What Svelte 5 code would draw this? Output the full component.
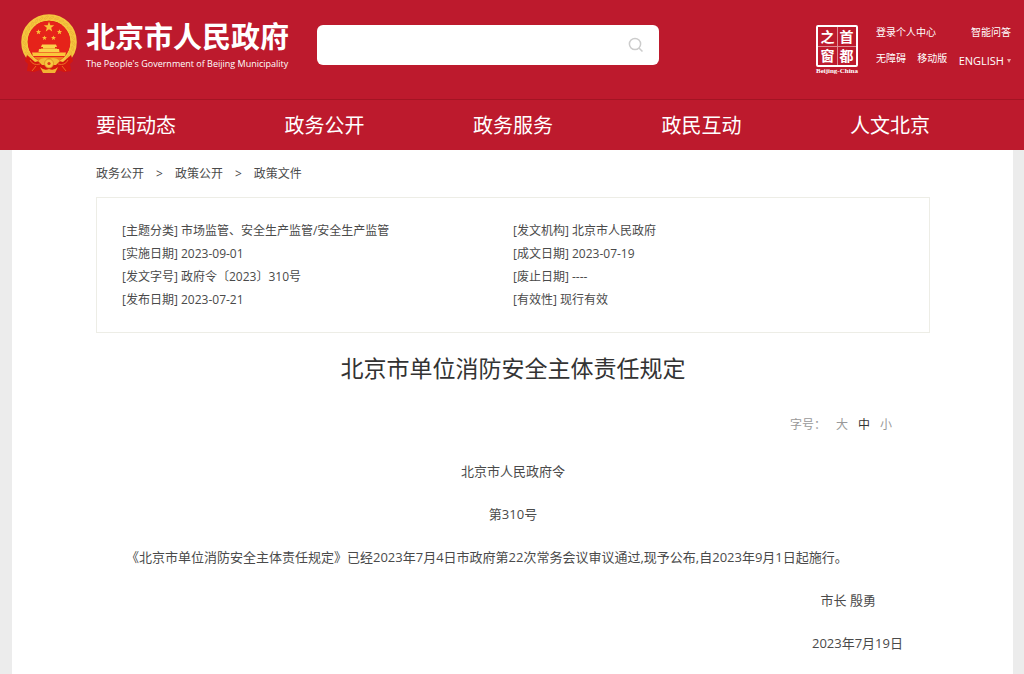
<script>
  const nav = ['要闻动态', '政务公开', '政务服务', '政民互动', '人文北京'];
  const crumbs = ['政务公开', '政策公开', '政策文件'];
  const metaColumns = [
    [
      ['主题分类', '市场监管、安全生产监管/安全生产监管'],
      ['实施日期', '2023-09-01'],
      ['发文字号', '政府令〔2023〕310号'],
      ['发布日期', '2023-07-21']
    ],
    [
      ['发文机构', '北京市人民政府'],
      ['成文日期', '2023-07-19'],
      ['废止日期', '----'],
      ['有效性', '现行有效']
    ]
  ];
  const sizes = ['大', '中', '小'];
  let size = $state('中');
  let query = $state('');
  const beads = Array.from({ length: 22 }, (_, i) => {
    const a = ((140 + (i * 260) / 21) * Math.PI) / 180;
    return [28 + 24.5 * Math.cos(a), 28 + 24.5 * Math.sin(a), (a * 180) / Math.PI + 60];
  });
  const stars = [
    [28, 13, 5.5],
    [17.5, 18, 2.8],
    [38.5, 18, 2.8],
    [23.5, 24, 2.6],
    [32.5, 24, 2.6]
  ];
  const starPoints = (x, y, r) =>
    Array.from({ length: 10 }, (_, i) => {
      const d = i % 2 ? r * 0.42 : r;
      const a = (i * Math.PI) / 5 - Math.PI / 2;
      return `${x + d * Math.cos(a)},${y + d * Math.sin(a)}`;
    }).join(' ');
</script>

<header>
  <div class="top">
    <a class="brand" href="#home">
      <svg class="emblem" viewBox="0 0 56 60" aria-hidden="true">
        <circle cx="28" cy="28" r="24.5" fill="none" stroke="#f5c63e" stroke-width="6.6" />
        {#each beads as [x, y, a]}
          <ellipse cx={x} cy={y} rx="2.4" ry=".9" fill="none" stroke="#e5a633" stroke-width=".5" transform="rotate({a} {x} {y})" />
        {/each}
        <circle cx="28" cy="28" r="21.3" fill="#e6231a" />
        {#each stars as [x, y, r]}
          <polygon points={starPoints(x, y, r)} fill="#fac23a" />
        {/each}
        <path d="M21 30.5H35L36 33H34V35H38L38.5 38H17.5L18 35H22V33H20Z" fill="#fbd04a" />
        <path d="M11 38.5H45L44 42H12Z" fill="#fbc63a" />
        <path d="M20 34.5H36" stroke="#e79a2c" stroke-width=".7" />
        <path d="M13 43H43L38 47H18Z" fill="#f0801f" />
        <path d="M6 41L14 48L22 46L25 50H31L34 46L42 48L50 41L52 47L49 50L50 57L43 58L37 56L34 59H22L19 56L13 58L6 57L7 50L4 47Z" fill="#d5170f" />
        <path d="M17 47Q22 42 28 45Q34 42 39 47L35 51H21Z" fill="#f3ba36" />
        <circle cx="28" cy="49.5" r="4.5" fill="#f8c740" stroke="#d98922" stroke-width=".8" />
        <circle cx="28" cy="49.5" r="1.6" fill="#de3a1a" />
        <path d="M19 53Q23 57 28 55Q33 57 37 53L34 59H22Z" fill="#f2b233" />
        <path d="M9 46Q12 52 19 50M47 46Q44 52 37 50M11 57L15 52M45 57L41 52" fill="none" stroke="#ed6b24" stroke-width="1" />
      </svg>
      <span class="names">
        <strong>北京市人民政府</strong>
        <span class="english">The People's Government of Beijing Municipality</span>
      </span>
    </a>
    <form class="search" onsubmit={(e) => e.preventDefault()}>
      <input type="text" aria-label="搜索" bind:value={query} />
      <button type="submit" aria-label="搜索">
        <svg viewBox="0 0 16 16" aria-hidden="true"><circle cx="7" cy="7" r="5.6" /><path d="M11 11L14.5 14.5" /></svg>
      </button>
    </form>
    <a class="seal" href="#portal">
      <span class="stamp"><b>之</b><b>首</b><b>窗</b><b>都</b></span>
      <span class="caption">Beijing-China</span>
    </a>
    <div class="tools">
      <div class="row"><a href="#login">登录个人中心</a><a href="#qa">智能问答</a></div>
      <div class="row"><a href="#access">无障碍</a><a href="#mobile">移动版</a><a class="lang" href="#english">ENGLISH<svg viewBox="0 0 4 4" aria-hidden="true"><path d="M0 0H4L2 4Z" fill="#eba6a0" /></svg></a></div>
    </div>
  </div>
  <nav>
    {#each nav as item}<a href="#{item}">{item}</a>{/each}
  </nav>
</header>

<main>
  <div class="crumbs">
    {#each crumbs as crumb, i}
      {#if i}<span>&gt;</span>{/if}
      <a href="#{crumb}">{crumb}</a>
    {/each}
  </div>
  <div class="meta">
    {#each metaColumns as column}
      <ul>
        {#each column as [label, value]}<li>[{label}] {value}</li>{/each}
      </ul>
    {/each}
  </div>
  <h1>北京市单位消防安全主体责任规定</h1>
  <div class="sizes">
    <span>字号：</span>
    {#each sizes as s}
      <button type="button" class:on={size === s} onclick={() => (size = s)}>{s}</button>
    {/each}
  </div>
  <article>
    <p class="center">北京市人民政府令</p>
    <p class="center">第310号</p>
    <p class="indent">《北京市单位消防安全主体责任规定》已经2023年7月4日市政府第22次常务会议审议通过,现予公布,自2023年9月1日起施行。</p>
    <p class="signer">市长 殷勇</p>
    <p class="date">2023年7月19日</p>
  </article>
</main>

<style>
  :global(body) {
    background: #ececec;
    color: #4a4a4a;
    font-family: 'Open Sans', 'Noto Sans CJK SC', sans-serif;
    font-size: 12px;
  }
  :global(#app) {
    display: flex;
    flex-direction: column;
    min-height: 100vh;
  }
  a {
    color: inherit;
    text-decoration: none;
  }
  button,
  input {
    font: inherit;
    color: inherit;
    border: 0;
    padding: 0;
    background: none;
  }
  button {
    cursor: pointer;
  }
  header {
    background: #bd1a2d;
    color: #fff;
  }
  .top {
    display: flex;
    align-items: flex-start;
    padding: 14px 13px 0 21px;
    height: 85px;
  }
  .brand {
    display: flex;
    gap: 9px;
    width: 296px;
    flex-shrink: 0;
  }
  .emblem {
    width: 56px;
    height: 60px;
    flex-shrink: 0;
  }
  .names {
    display: flex;
    flex-direction: column;
    white-space: nowrap;
    padding-top: 4px;
  }
  strong {
    font-size: 29px;
    line-height: 38px;
  }
  .english {
    font-size: 9px;
    line-height: 16px;
  }
  .search {
    display: flex;
    align-items: center;
    flex: 0 1 342px;
    height: 40px;
    margin-top: 11px;
    background: #fff;
    border-radius: 6px;
    color: #333;
  }
  .search input {
    flex: 1;
    min-width: 0;
    height: 40px;
    padding: 0 12px;
    outline: 0;
    font-size: 14px;
  }
  .search button {
    width: 16px;
    height: 16px;
    margin-right: 15px;
  }
  .search svg {
    display: block;
    width: 16px;
    height: 16px;
    fill: none;
    stroke: #ccc;
    stroke-width: 1.5;
  }
  .seal {
    display: flex;
    flex-direction: column;
    align-items: center;
    margin: 11px 16px 0 auto;
    width: 46px;
  }
  .stamp {
    display: grid;
    grid-template-columns: 1fr 1fr;
    box-sizing: border-box;
    width: 42px;
    height: 42px;
    border: 2px solid #fff;
    border-radius: 2px;
    background:
      linear-gradient(#e08a92, #e08a92) center / 1px 100% no-repeat,
      linear-gradient(#e08a92, #e08a92) center / 100% 1px no-repeat;
  }
  .stamp b {
    font: 700 14px/19px 'Noto Sans CJK SC', sans-serif;
    text-align: center;
  }
  .caption {
    font: bold 7px/8px 'Liberation Serif', serif;
    white-space: nowrap;
  }
  .tools {
    display: flex;
    flex-direction: column;
    gap: 10px;
    width: 135px;
    padding-top: 10px;
    font-size: 10px;
    line-height: 16px;
    white-space: nowrap;
  }
  .row {
    display: flex;
    justify-content: space-between;
  }
  .lang {
    font-size: 11px;
    line-height: 22px;
  }
  .lang svg {
    width: 4px;
    height: 4px;
    margin-left: 3px;
    vertical-align: 2px;
  }
  nav {
    display: flex;
    justify-content: space-between;
    padding: 2px 94px 0 96px;
    border-top: 1px solid #a31423;
    font-size: 20px;
    line-height: 48px;
  }
  main {
    flex: 1;
    margin: 0 11px 0 12px;
    padding: 12px 83px 0 84px;
    background: #fff;
  }
  .crumbs {
    display: flex;
    gap: 12px;
    line-height: 24px;
  }
  .meta {
    display: grid;
    grid-template-columns: 391px 1fr;
    margin-top: 11px;
    padding: 21px 25px;
    border: 1px solid #edede6;
  }
  ul {
    list-style: none;
    margin: 0;
    padding: 0;
    line-height: 23px;
  }
  h1 {
    margin: 18px 0 0;
    font-size: 23px;
    line-height: 34px;
    font-weight: 400;
    text-align: center;
    color: #333;
  }
  .sizes {
    display: flex;
    justify-content: flex-end;
    gap: 10px;
    margin-top: 31px;
    padding-right: 38px;
    line-height: 18px;
    color: #999;
  }
  .sizes .on {
    color: #333;
  }
  article {
    display: flex;
    flex-direction: column;
    gap: 20px;
    margin-top: 26px;
    font-size: 13px;
    line-height: 23px;
  }
  p {
    margin: 0;
  }
  .center {
    text-align: center;
  }
  .indent {
    text-indent: 30px;
  }
  .signer,
  .date {
    text-align: right;
  }
  .signer {
    padding-right: 54px;
  }
  .date {
    padding-right: 27px;
  }
</style>
